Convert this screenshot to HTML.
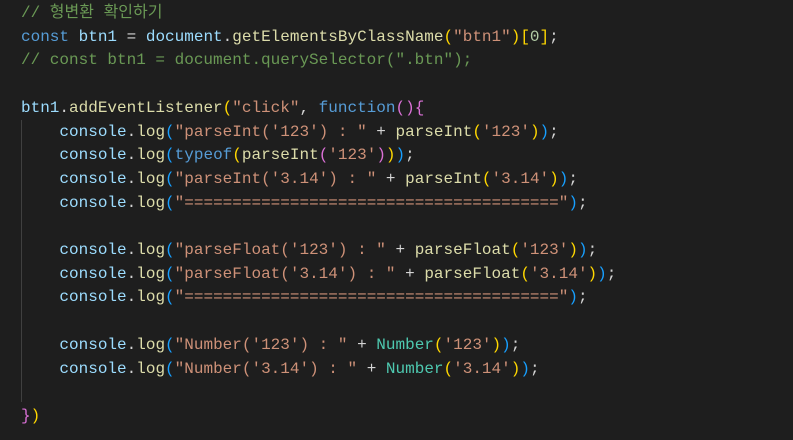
<!DOCTYPE html>
<html><head><meta charset="utf-8"><style>
body{margin:0;background:#1e1e1e;width:793px;height:440px;overflow:hidden;}
pre{margin:0;position:absolute;left:21px;top:2px;font-family:"Liberation Mono","Noto Sans CJK KR",monospace;font-size:16px;line-height:23.7px;color:#d4d4d4;}
.c{color:#6a9955}.k{color:#569cd6}.v{color:#9cdcfe}.f{color:#dcdcaa}.s{color:#ce9178}.n{color:#b5cea8}.t{color:#4ec9b0}
.g{color:#ffd700}.p{color:#da70d6}.b{color:#179fff}
.guide{position:absolute;left:21px;top:120px;width:1px;height:282px;background:#404040;}
</style></head><body>
<div class="guide"></div>
<pre><span class="c">// 형변환 확인하기</span>
<span class="k">const</span> <span class="v">btn1</span> = <span class="v">document</span>.<span class="f">getElementsByClassName</span><span class="g">(</span><span class="s">"btn1"</span><span class="g">)[</span><span class="n">0</span><span class="g">]</span>;
<span class="c">// const btn1 = document.querySelector(".btn");</span>

<span class="v">btn1</span>.<span class="f">addEventListener</span><span class="g">(</span><span class="s">"click"</span>, <span class="k">function</span><span class="p">(){</span>
    <span class="v">console</span>.<span class="f">log</span><span class="b">(</span><span class="s">"parseInt('123') : "</span> + <span class="f">parseInt</span><span class="g">(</span><span class="s">'123'</span><span class="g">)</span><span class="b">)</span>;
    <span class="v">console</span>.<span class="f">log</span><span class="b">(</span><span class="k">typeof</span><span class="g">(</span><span class="f">parseInt</span><span class="p">(</span><span class="s">'123'</span><span class="p">)</span><span class="g">)</span><span class="b">)</span>;
    <span class="v">console</span>.<span class="f">log</span><span class="b">(</span><span class="s">"parseInt('3.14') : "</span> + <span class="f">parseInt</span><span class="g">(</span><span class="s">'3.14'</span><span class="g">)</span><span class="b">)</span>;
    <span class="v">console</span>.<span class="f">log</span><span class="b">(</span><span class="s">"======================================="</span><span class="b">)</span>;

    <span class="v">console</span>.<span class="f">log</span><span class="b">(</span><span class="s">"parseFloat('123') : "</span> + <span class="f">parseFloat</span><span class="g">(</span><span class="s">'123'</span><span class="g">)</span><span class="b">)</span>;
    <span class="v">console</span>.<span class="f">log</span><span class="b">(</span><span class="s">"parseFloat('3.14') : "</span> + <span class="f">parseFloat</span><span class="g">(</span><span class="s">'3.14'</span><span class="g">)</span><span class="b">)</span>;
    <span class="v">console</span>.<span class="f">log</span><span class="b">(</span><span class="s">"======================================="</span><span class="b">)</span>;

    <span class="v">console</span>.<span class="f">log</span><span class="b">(</span><span class="s">"Number('123') : "</span> + <span class="t">Number</span><span class="g">(</span><span class="s">'123'</span><span class="g">)</span><span class="b">)</span>;
    <span class="v">console</span>.<span class="f">log</span><span class="b">(</span><span class="s">"Number('3.14') : "</span> + <span class="t">Number</span><span class="g">(</span><span class="s">'3.14'</span><span class="g">)</span><span class="b">)</span>;

<span class="p">}</span><span class="g">)</span></pre>
</body></html>
